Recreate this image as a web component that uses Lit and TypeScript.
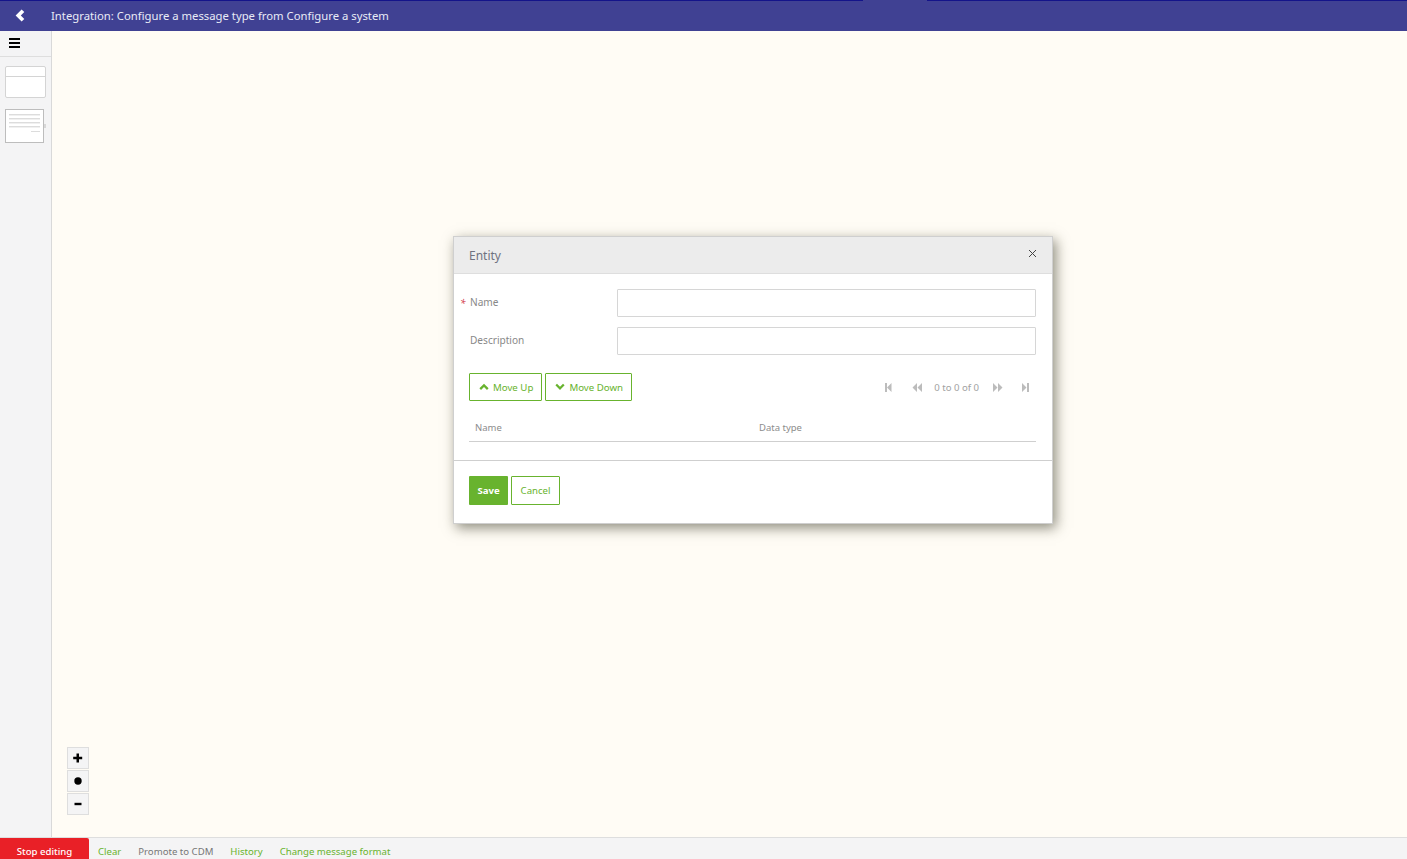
import { LitElement, html, css, svg } from "lit";
import { customElement } from "lit/decorators.js";

const chevUp = svg`<path d="M.4 6.300 5 1.700 9.600 6.300 8 7.900 5 4.900 2 7.900Z" fill="currentColor"/>`;
const chevDown = svg`<path d="M.4 3.300 2 1.700 5 4.700 8 1.700 9.600 3.300 5 7.900Z" fill="currentColor"/>`;

@customElement("app-root")
export class AppRoot extends LitElement {
  static styles = css`
    :host { display: flex; flex-direction: column; height: 100vh; overflow: hidden; position: relative; font-family: "Noto Sans", "Open Sans", sans-serif; font-size: 10px; color: #666; background: #fffcf5; }
    .top { flex: 0 0 31px; box-sizing: border-box; height: 31px; background: #404193; display: flex; align-items: center; color: #e8ebf6; position: relative; }
    .topline { position: absolute; top: 0; left: 0; right: 0; height: 1px; display: grid; grid-template-columns: 863px 64px 1fr; }
    .topline i { background: #14148a; }
    .topline i:nth-child(2) { background: transparent; }
    .back { width: 51px; flex: none; box-sizing: border-box; padding-left: 15px; display: flex; }
    .title { font-size: 11.3px; white-space: nowrap; }
    .main { flex: 1; display: flex; min-height: 0; }
    .side { flex: 0 0 52px; box-sizing: border-box; background: #f4f4f5; border-right: 1px solid #d9d9d9; display: flex; flex-direction: column; }
    .burger { height: 26px; box-sizing: border-box; border-bottom: 1px solid #dedede; display: flex; padding-left: 9px; align-items: flex-start; padding-top: 7px; }
    .stencil { display: flex; flex-direction: column; gap: 11px; padding: 9px 0 0 5px; }
    .s1 { width: 41px; height: 32px; box-sizing: border-box; border: 1px solid #d4d4d4; border-radius: 2px; background: #fff; }
    .s1 div { height: 9px; border-bottom: 1px solid #d4d4d4; }
    .s2 { width: 39px; height: 34px; box-sizing: border-box; border: 1px solid #bdbdbd; background: #fff; position: relative; padding: 4px 3px; display: flex; flex-direction: column; gap: 3px; }
    .s2 b { display: block; height: 1px; background: #dcdcdc; box-shadow: 0 1px 0 #f0f0f0; }
    .s2 b:last-child { width: 9px; align-self: flex-end; margin-top: 1px; box-shadow: none; }
    .s2::after { content: ""; position: absolute; right: -3px; top: 14px; width: 2px; height: 4px; background: #d8d8d8; }
    .canvas { flex: 1; background: #fffcf5; position: relative; }
    .zoom { position: absolute; left: 15px; bottom: 22px; display: flex; flex-direction: column; gap: 1px; }
    .zoom div { width: 22px; height: 22px; box-sizing: border-box; border: 1px solid #dedede; background: #f4f4f5; display: flex; align-items: center; justify-content: center; }
    .bottom { flex: 0 0 22px; box-sizing: border-box; height: 22px; background: #f4f4f5; border-top: 1px solid #dedede; display: flex; align-items: flex-start; white-space: nowrap; font-size: 9.6px; overflow: hidden; }
    .stop { width: 89px; height: 21px; background: #e92027; color: #fff; text-align: center; font-weight: 500; padding-top: 7px; box-sizing: border-box; border-top-right-radius: 2px; }
    .links { display: flex; gap: 17px; padding-left: 9px; padding-top: 7px; color: #68b32e; }
    .links .grey { color: #777; }
    .modal { position: absolute; left: 453px; top: 236px; width: 600px; height: 288px; box-sizing: border-box; background: #fff; border: 1px solid #cfcfcf; box-shadow: 3px 4px 12px rgba(50, 50, 30, 0.55); display: flex; flex-direction: column; }
    .mh { flex: 0 0 37px; box-sizing: border-box; background: #ececec; border-bottom: 1px solid #dedede; display: flex; justify-content: space-between; padding: 0 15px; }
    .mh span { font-size: 12px; color: #6f7280; padding-top: 10px; }
    .x { margin: 12px 0 0 0; }
    .mb { flex: 1; padding: 15px 16px 0 15px; display: flex; flex-direction: column; min-height: 0; }
    .row { display: grid; grid-template-columns: 148px 1fr; height: 28px; margin-bottom: 10px; align-items: center; font-size: 10.1px; color: #888; position: relative; }
    .row label { padding-left: 1px; margin-top: -2px; }
    .req { position: absolute; left: -9px; top: 7px; color: #d23b4b; font-size: 10px; }
    .inp { height: 28px; box-sizing: border-box; border: 1px solid #d6d6d6; border-radius: 1px; background: #fff; }
    .tools { display: flex; height: 28px; margin-top: 8px; gap: 3px; align-items: center; }
    .btn { height: 28px; box-sizing: border-box; border: 1px solid #68b32e; border-radius: 1px; background: #fff; color: #68b32e; display: flex; align-items: center; gap: 4px; padding: 0 8px 0 9px; font-size: 9.7px; }
    .pager { margin-left: auto; display: flex; align-items: center; color: #a2a2a2; font-size: 9.6px; padding-right: 7px; }
    .pager svg { display: block; }
    .thead { display: grid; grid-template-columns: 284px 1fr; margin-top: 13px; height: 27px; border-bottom: 1px solid #cfcfcf; align-items: center; padding-left: 6px; font-size: 9.5px; color: #8c8c8c; }
    .mf { flex: 0 0 63px; box-sizing: border-box; border-top: 1px solid #cfcfcf; padding: 15px 15px 0; display: flex; gap: 3px; align-items: flex-start; }
    .save { width: 39px; height: 29px; border-radius: 1px; background: #68b32e; color: #fff; font-weight: 700; display: flex; align-items: center; justify-content: center; font-size: 9.6px; }
    .cancel { width: 49px; height: 29px; box-sizing: border-box; border: 1px solid #68b32e; border-radius: 1px; color: #68b32e; display: flex; align-items: center; justify-content: center; font-size: 9.6px; }
  `;

  render() {
    return html`
      <div class="top">
        <div class="topline"><i></i><i></i><i></i></div>
        <div class="back"><svg width="10" height="13" viewBox="0 0 10 13"><path d="M6.600 .6 9.300 3.100 5.800 6.500 9.300 9.900 6.600 12.400.6 6.500Z" fill="#fff"/></svg></div>
        <div class="title">Integration: Configure a message type from Configure a system</div>
      </div>
      <div class="main">
        <div class="side">
          <div class="burger"><svg width="11" height="10" viewBox="0 0 11 10"><path d="M0 0h11v2H0zM0 4h11v2H0zM0 8h11v2H0z" fill="#000"/></svg></div>
          <div class="stencil">
            <div class="s1"><div></div></div>
            <div class="s2"><b></b><b></b><b></b><b></b><b></b></div>
          </div>
        </div>
        <div class="canvas">
          <div class="zoom">
            <div><svg width="10" height="10" viewBox="0 0 10 10"><path d="M3.500.5h2.500V3.700h3.200v2.500H6v3.300H3.500V6.200H.2V3.700H3.500Z" fill="#000"/></svg></div>
            <div><svg width="8" height="8" viewBox="0 0 8 8"><circle cx="4" cy="4" r="3.700" fill="#000"/></svg></div>
            <div><svg width="8" height="8" viewBox="0 0 8 8"><path d="M.5 2.800h7v2.400h-7z" fill="#000"/></svg></div>
          </div>
        </div>
      </div>
      <div class="bottom">
        <div class="stop">Stop editing</div>
        <div class="links"><span>Clear</span><span class="grey">Promote to CDM</span><span>History</span><span>Change message format</span></div>
      </div>
      <div class="modal">
        <div class="mh"><span>Entity</span>
          <svg class="x" width="9" height="9" viewBox="0 0 9 9"><path d="M1 1 8 8M8 1 1 8" stroke="#444" stroke-width="1" fill="none"/></svg>
        </div>
        <div class="mb">
          <div class="row"><i class="req">*</i><label>Name</label><div class="inp"></div></div>
          <div class="row"><label>Description</label><div class="inp"></div></div>
          <div class="tools">
            <div class="btn"><svg width="10" height="10" viewBox="0 0 10 10">${chevUp}</svg>Move Up</div>
            <div class="btn"><svg width="10" height="10" viewBox="0 0 10 10">${chevDown}</svg>Move Down</div>
            <div class="pager">
              <svg width="7" height="9" viewBox="0 0 7 9" style="margin-right:20px"><path d="M0 0h2v9H0zM6.500 0v9L2 4.500Z" fill="#bcbcbc"/></svg>
              <svg width="10" height="9" viewBox="0 0 10 9" style="margin-right:12px"><path d="M5 0v9L.5 4.500ZM10 0v9L5.500 4.500Z" fill="#bcbcbc"/></svg>
              <span>0 to 0 of 0</span>
              <svg width="10" height="9" viewBox="0 0 10 9" style="margin-left:14px"><path d="M0 0v9l4.500-4.500ZM5 0v9l4.500-4.500Z" fill="#bcbcbc"/></svg>
              <svg width="7" height="9" viewBox="0 0 7 9" style="margin-left:19px"><path d="M0 0v9l4.500-4.500ZM5 0H7v9H5z" fill="#bcbcbc"/></svg>
            </div>
          </div>
          <div class="thead"><span>Name</span><span>Data type</span></div>
        </div>
        <div class="mf"><div class="save">Save</div><div class="cancel">Cancel</div></div>
      </div>
    `;
  }
}
